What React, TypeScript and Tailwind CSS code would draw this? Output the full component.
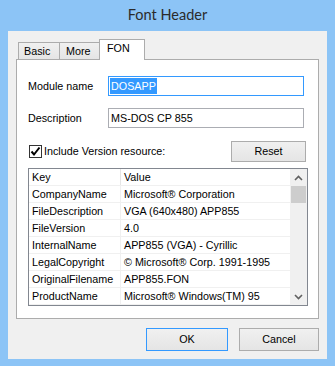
import React from "react";

const rows: [string, string][] = [
  ["CompanyName", "Microsoft® Corporation"],
  ["FileDescription", "VGA (640x480) APP855"],
  ["FileVersion", "4.0"],
  ["InternalName", "APP855 (VGA) - Cyrillic"],
  ["LegalCopyright", "© Microsoft® Corp. 1991-1995"],
  ["OriginalFilename", "APP855.FON"],
  ["ProductName", "Microsoft® Windows(TM) 95"],
];

export default function App() {
  return (
    <div
      className="w-[335px] h-[366px] bg-[#8cc4f6] flex flex-col text-[10.75px] text-black overflow-hidden"
      style={{ fontFamily: '"Liberation Sans", Arial, sans-serif' }}
    >
      <div
        className="h-[31px] flex items-center justify-center text-[14.5px] text-[#2b2b2b] pb-[1px]"
        style={{ fontFamily: 'Lato, "Noto Sans", sans-serif' }}
      >
        Font Header
      </div>
      <div className="mx-[8px] mb-[7px] flex-1 bg-[#f0f0f0] px-[8px] pt-[8px] flex flex-col">
        {/* tabs */}
        <div className="h-[20px] flex items-end pl-[2px]">
          <div className="h-[17px] w-[42px] border border-b-0 border-[#acacac] bg-gradient-to-b from-[#f0f0f0] to-[#e5e5e5] pl-[5px] leading-[17px]">
            Basic
          </div>
          <div className="h-[17px] w-[41px] -ml-px border border-b-0 border-[#acacac] bg-gradient-to-b from-[#f0f0f0] to-[#e5e5e5] pl-[6px] leading-[17px]">
            More
          </div>
          <div className="relative z-10 h-[21px] w-[46px] -ml-px -mb-px border border-b-0 border-[#acacac] bg-white pl-[7px] leading-[17px]">
            FON
          </div>
        </div>
        {/* panel */}
        <div className="h-[260px] border border-[#acacac] bg-white pl-[11px] pt-[16px] flex flex-col">
          <div className="flex items-center h-[20px]">
            <div className="w-[80px]">Module name</div>
            <div className="w-[196px] h-[20px] border border-[#3399ff] flex items-center pl-[1px]">
              <span className="bg-[#3399ff] text-white leading-[16px] px-[1px]">DOSAPP</span>
            </div>
          </div>
          <div className="flex items-center h-[20px] mt-[12px]">
            <div className="w-[80px]">Description</div>
            <div className="w-[196px] h-[20px] border border-[#abadb3] flex items-center pl-[2px]">
              MS-DOS CP 855
            </div>
          </div>
          <div className="flex items-center justify-between w-[278px] h-[20px] mt-[13px]">
            <div className="flex items-center">
              <div className="ml-[1px] w-[13px] h-[13px] border border-[#333] bg-white flex items-center justify-center">
                <svg width="11" height="11" viewBox="0 0 11 11">
                  <path d="M1.5 5.5 L4 8.5 L9.5 1.5" fill="none" stroke="#000" strokeWidth="2" />
                </svg>
              </div>
              <span className="ml-[2px]">Include Version resource:</span>
            </div>
            <div className="w-[75px] h-[21px] border border-[#acacac] bg-gradient-to-b from-[#f0f0f0] to-[#e5e5e5] flex items-center justify-center">
              Reset
            </div>
          </div>
          <div className="mt-[7px] w-[280px] h-[138px] border border-[#828790] flex">
            <div className="flex-1 flex flex-col">
              <div className="h-[17px] flex border-b border-[#f0f0f0]">
                <div className="w-[92px] pl-[3px] border-r border-[#e5e5e5] leading-[16px]">Key</div>
                <div className="pl-[3px] leading-[16px]">Value</div>
              </div>
              {rows.map(([k, v]) => (
                <div key={k} className="h-[17px] flex border-b border-[#f0f0f0]">
                  <div className="w-[92px] pl-[3px] border-r border-[#f0f0f0] leading-[16px] whitespace-nowrap overflow-hidden">{k}</div>
                  <div className="pl-[3px] leading-[16px] whitespace-nowrap">{v}</div>
                </div>
              ))}
            </div>
            <div className="w-[17px] bg-[#f0f0f0] flex flex-col">
              <div className="h-[17px] flex items-center justify-center">
                <svg width="9" height="6" viewBox="0 0 9 6">
                  <path d="M1 5 L4.5 1.5 L8 5" fill="none" stroke="#606060" strokeWidth="1.6" />
                </svg>
              </div>
              <div className="mx-[1px] h-[17px] bg-[#cdcdcd]" />
              <div className="flex-1" />
              <div className="h-[17px] flex items-center justify-center">
                <svg width="9" height="6" viewBox="0 0 9 6">
                  <path d="M1 1 L4.5 4.5 L8 1" fill="none" stroke="#606060" strokeWidth="1.6" />
                </svg>
              </div>
            </div>
          </div>
        </div>
        {/* buttons */}
        <div className="flex mt-[9px] pl-[130px]">
          <div className="w-[82px] h-[23px] border border-[#3399ff] bg-gradient-to-b from-[#f0f0f0] to-[#e5e5e5] flex items-center justify-center">
            OK
          </div>
          <div className="ml-[11px] w-[80px] h-[23px] border border-[#acacac] bg-gradient-to-b from-[#f0f0f0] to-[#e5e5e5] flex items-center justify-center">
            Cancel
          </div>
        </div>
      </div>
    </div>
  );
}
